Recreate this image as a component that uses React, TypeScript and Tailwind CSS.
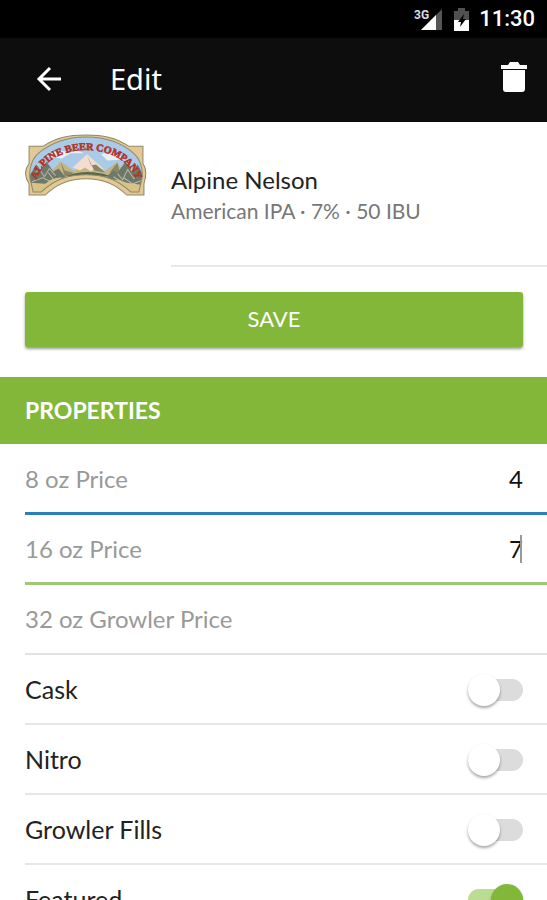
import { useState } from "react";

const PRICE_FIELDS = [
  { id: "price-8", label: "8 oz Price", initial: "4", line: "border-b-[3px] border-[#2d7fb8]" },
  { id: "price-16", label: "16 oz Price", initial: "7", line: "border-b-[3px] border-[#9cc878]", caret: true },
  { id: "price-32", label: "32 oz Growler Price", initial: "", line: "border-b-2 border-[#e2e2e2]" },
];

const TOGGLES = [
  { id: "cask", label: "Cask", initial: false },
  { id: "nitro", label: "Nitro", initial: false },
  { id: "growler-fills", label: "Growler Fills", initial: false },
  { id: "featured", label: "Featured", initial: true },
];

function StatusBar() {
  return (
    <div className="flex h-[38px] shrink-0 items-center justify-end bg-black pr-3 text-white">
      <svg width="28" height="24" viewBox="0 0 28 24" aria-hidden="true">
        <path d="M28 2v21H7z" fill="#555" />
        <path d="M22 8v15H7z" fill="#fff" />
        <text x="0" y="12" fontFamily="Roboto, sans-serif" fontSize="12" fontWeight="700" fill="#ddd" stroke="#000" strokeWidth="2" paintOrder="stroke">
          3G
        </text>
      </svg>
      <svg className="ml-3" width="15" height="23" viewBox="0 0 15 23" aria-hidden="true">
        <path d="M4 0h7v3h4v9H0V3h4z" fill="#505050" />
        <path d="M0 12h15v11H0z" fill="#fff" />
        <path d="M10 6 4 14h3l-1 5 6-8H9z" fill="#000" />
      </svg>
      <span className="ml-[10px] font-[Roboto,sans-serif] text-[22px] leading-6 font-medium">11:30</span>
    </div>
  );
}

function AppBar() {
  return (
    <header className="flex h-[84px] shrink-0 items-center bg-[#0d0d0d] pr-5 pb-0.5 pl-9 text-white">
      <button type="button" aria-label="Back">
        <svg width="26" height="26" viewBox="0 0 26 26" fill="none" stroke="#fff" strokeWidth="3">
          <path d="M25 13H3M14 2 3 13l11 11" />
        </svg>
      </button>
      <h1 className="ml-12 flex-1 font-['Noto_Sans',sans-serif] text-[29px] leading-9">Edit</h1>
      <button type="button" aria-label="Delete">
        <svg width="26" height="34" viewBox="0 0 26 34" fill="#fff">
          <path d="M0 3h7l2-3h8l2 3h7v4H0zM2 8h22v19q0 3-3 3H5q-3 0-3-3z" />
        </svg>
      </button>
    </header>
  );
}

function BreweryLogo() {
  return (
    <svg className="w-[122px] shrink-0" viewBox="1 0 120 61" role="img" aria-label="Alpine Beer Company">
      <defs>
        <clipPath id="scene">
          <path d="M7 48C4 40 6 27 13 20C28 7 44 3 61 3s34 4 48 17c7 7 9 20 6 28l-2 9h-8C90 43 76 40 61 40S32 43 17 57H9z" />
        </clipPath>
        <path id="arch" d="M12 48C20 5 102 5 111 48" />
      </defs>
      <path
        d="M5 12h14C32 3 45 1 61 1s29 2 42 11h14v17q5 7 1 20v11h-17C89 48 76 44 61 44S33 48 21 60H5V49q-7-11 0-20z"
        fill="#e3c795"
        stroke="#8f8a68"
        strokeWidth="1"
      />
      <g clipPath="url(#scene)">
        <path d="M0 0h122v62H0z" fill="#a9cbe8" />
        <path d="M22 22q12-9 24-3l-9 5zM76 20q14-6 22 5l-16 1zM42 19q10-5 17 0z" fill="#e9f0f4" />
        <path d="M18 46 36 27l14 10 12-15 17 15 12-9 18 20v14H18z" fill="#c3b583" />
        <path d="m48 33 14-13 17 15-8-2-5 4-6-4-5 3z" fill="#f2ddcf" />
        <path d="m62 21 4 10 5-1 9 8-11-2zM36 27l4 9 9 2-9 4zM92 28l-7 9 10 5z" fill="#8b8766" />
        <path d="M42 41q20-7 42 0l-8 2q-14-4-28 0z" fill="#56694f" />
        <path d="m5 42 7-12 5 6 5-9 7 10 5-3 8 10-10 3-10 9H4zM118 42l-6-12-6 7-6-10-8 11-5-2-7 8 12 4 12 10h10z" fill="#6d786a" />
        <path d="m10 40 5-6 5 8 5-8 6 7M92 39l5 6 5-10 6 9 4-5M8 47l10-4 9 4M98 43l9 6 8-3M24 38l6 8M88 42l8 5" fill="none" stroke="#b4b9a2" strokeWidth="1" />
        <path d="M7 57V48l14 1q8-7 17-6L19 58zM115 57V50l-14-2q-8-4-17-3l19 13z" fill="#d8c287" />
      </g>
      <path
        d="M7 48C4 40 6 27 13 20C28 7 44 3 61 3s34 4 48 17c7 7 9 20 6 28l-2 9h-8C90 43 76 40 61 40S32 43 17 57H9z"
        fill="none"
        stroke="#8f8a68"
        strokeWidth="1"
      />
      <text fontFamily="Liberation Serif, serif" fontSize="10" fontWeight="700" fill="#b0352b" stroke="#b0352b" strokeWidth="0.6">
        <textPath href="#arch" startOffset="50%" textAnchor="middle">
          ALPINE BEER COMPANY
        </textPath>
      </text>
    </svg>
  );
}

function PriceField({ field }: { field: (typeof PRICE_FIELDS)[number] }) {
  const [value, setValue] = useState(field.initial);

  return (
    <div className={`ml-[25px] flex h-[70px] shrink-0 items-center pr-6 ${field.line}`}>
      <label htmlFor={field.id} className="shrink-0 text-[#999]">
        {field.label}
      </label>
      <div className="relative flex min-w-0 flex-1">
        <input
          id={field.id}
          inputMode="decimal"
          value={value}
          onChange={(e) => setValue(e.target.value)}
          className="w-full min-w-0 bg-transparent text-right text-[#111] outline-none"
        />
        {field.caret && <span className="absolute inset-y-0.5 right-px w-[2px] bg-[#999]" />}
      </div>
    </div>
  );
}

function ToggleRow({ toggle }: { toggle: (typeof TOGGLES)[number] }) {
  const [on, setOn] = useState(toggle.initial);

  return (
    <div className="ml-[25px] flex h-[70px] shrink-0 items-center justify-between border-b-2 border-[#e6e6e6] pr-6">
      <label htmlFor={toggle.id} className="text-[25px] leading-8 text-[#222]">
        {toggle.label}
      </label>
      <input
        id={toggle.id}
        type="checkbox"
        role="switch"
        checked={on}
        onChange={(e) => setOn(e.target.checked)}
        className="mt-0.5 flex h-[22px] w-[55px] cursor-pointer appearance-none items-center rounded-full bg-[#dcdcdc] before:size-8 before:shrink-0 before:rounded-full before:bg-white before:shadow-[0_2px_3px_rgba(0,0,0,0.35)] checked:justify-end checked:bg-[#bcdc93] checked:before:bg-[#82b73a]"
      />
    </div>
  );
}

export default function App() {
  return (
    <div className="flex h-screen flex-col overflow-hidden bg-white font-[Lato,sans-serif] text-2xl">
      <StatusBar />
      <AppBar />
      <main className="flex min-h-0 flex-1 flex-col overflow-hidden">
        <section className="flex shrink-0 items-start gap-6 pl-[25px]">
          <div className="pt-3">
            <BreweryLogo />
          </div>
          <div className="h-[145px] flex-1 border-b-2 border-[#e8e8e8] pt-[42px]">
            <h2 className="leading-8 text-[#222]">Alpine Nelson</h2>
            <p className="text-[21px] leading-[30px] text-[#777]">American IPA · 7% · 50 IBU</p>
          </div>
        </section>
        <button
          type="button"
          className="mr-6 ml-[25px] mt-[25px] mb-[30px] h-[55px] shrink-0 rounded-[3px] bg-[#82b73a] pb-0.5 text-[22px] text-white shadow-[0_2px_3px_rgba(0,0,0,0.4)]"
        >
          SAVE
        </button>
        <h3 className="flex h-[67px] shrink-0 items-center bg-[#82b73a] pl-[25px] text-[23px] font-bold text-white">PROPERTIES</h3>
        <form className="flex flex-col pt-px" onSubmit={(e) => e.preventDefault()}>
          {PRICE_FIELDS.map((f) => (
            <PriceField key={f.id} field={f} />
          ))}
          {TOGGLES.map((t) => (
            <ToggleRow key={t.id} toggle={t} />
          ))}
        </form>
      </main>
    </div>
  );
}
